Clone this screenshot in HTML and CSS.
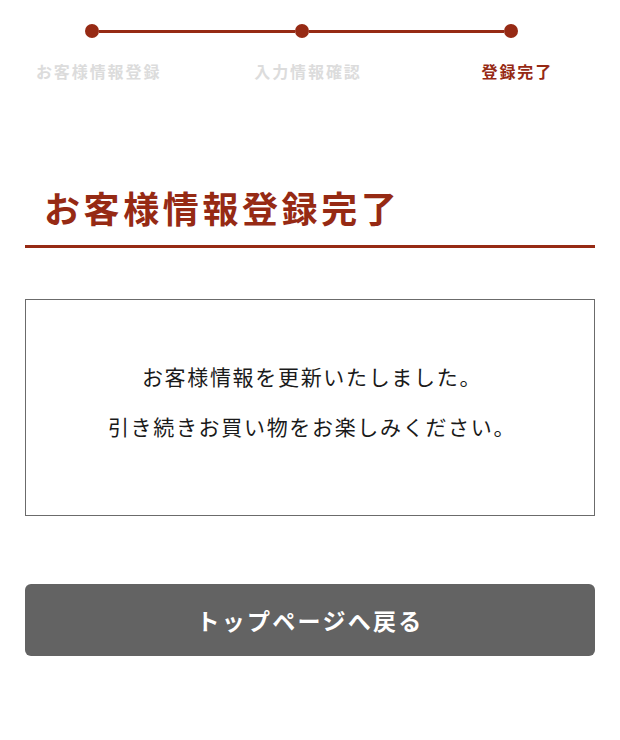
FILE: index.html
```html
<!DOCTYPE html>
<html lang="ja">
<head>
    <meta charset="UTF-8">
    <meta name="viewport" content="width=device-width, initial-scale=1.0">
    <title>お客様情報登録完了</title>
    <link rel="stylesheet" href="styles.css">
</head>
<body>
    <div class="page">
        <div class="steps">
            <div class="step-track">
                <span class="step-dot"></span>
                <span class="step-line"></span>
                <span class="step-dot"></span>
                <span class="step-line"></span>
                <span class="step-dot"></span>
            </div>
            <ol class="step-list">
                <li class="step-label">お客様情報登録</li>
                <li class="step-label">入力情報確認</li>
                <li class="step-label is-current">登録完了</li>
            </ol>
        </div>

        <h1 class="heading">お客様情報登録完了</h1>

        <div class="message-box">
            <p class="message">お客様情報を更新いたしました。</p>
            <p class="message">引き続きお買い物をお楽しみください。</p>
        </div>

        <a href="#" class="btn-top">トップページへ戻る</a>
    </div>
</body>
</html>
```

FILE: styles.css
```css
body {
    margin: 0;
    background-color: #fff;
    color: #1a1a1a;
    font-family: "Noto Sans CJK JP", "Noto Sans", sans-serif;
    overflow-x: hidden;
}

.page {
    padding: 0 25px 40px;
}

/* progress steps */
.steps {
    padding-top: 24px;
}

.step-track {
    display: flex;
    align-items: center;
    width: 433px;
    margin-left: 60px;
}

.step-dot {
    width: 14px;
    height: 14px;
    border-radius: 50%;
    background-color: #962a14;
    flex: none;
}

.step-line {
    flex: 1;
    height: 3px;
    background-color: #962a14;
}

.step-list {
    list-style: none;
    margin: 22px 0 0 -31px;
    padding: 0;
    width: 628px;
    display: grid;
    grid-template-columns: repeat(3, 1fr);
}

.step-label {
    text-align: center;
    font-size: 16px;
    line-height: 22px;
    font-weight: bold;
    letter-spacing: 0.12em;
    color: #dcdcdc;
}

.step-label.is-current {
    color: #962a14;
}

/* heading */
.heading {
    margin: 100px 0 0;
    padding: 0 0 13px 19px;
    font-size: 36px;
    line-height: 50px;
    font-weight: bold;
    letter-spacing: 0.1em;
    color: #962a14;
    border-bottom: 3px solid #962a14;
}

/* message */
.message-box {
    margin-top: 51px;
    padding: 51px 20px 64px 24px;
    border: 1px solid #6b6b6b;
    text-align: center;
}

.message {
    margin: 0;
    font-size: 21px;
    line-height: 50px;
    letter-spacing: 0.08em;
}

/* button */
.btn-top {
    display: block;
    margin-top: 68px;
    height: 72px;
    line-height: 72px;
    border-radius: 6px;
    background-color: #636363;
    color: #fff;
    text-align: center;
    text-decoration: none;
    font-size: 23px;
    font-weight: bold;
    letter-spacing: 0.1em;
}
```
